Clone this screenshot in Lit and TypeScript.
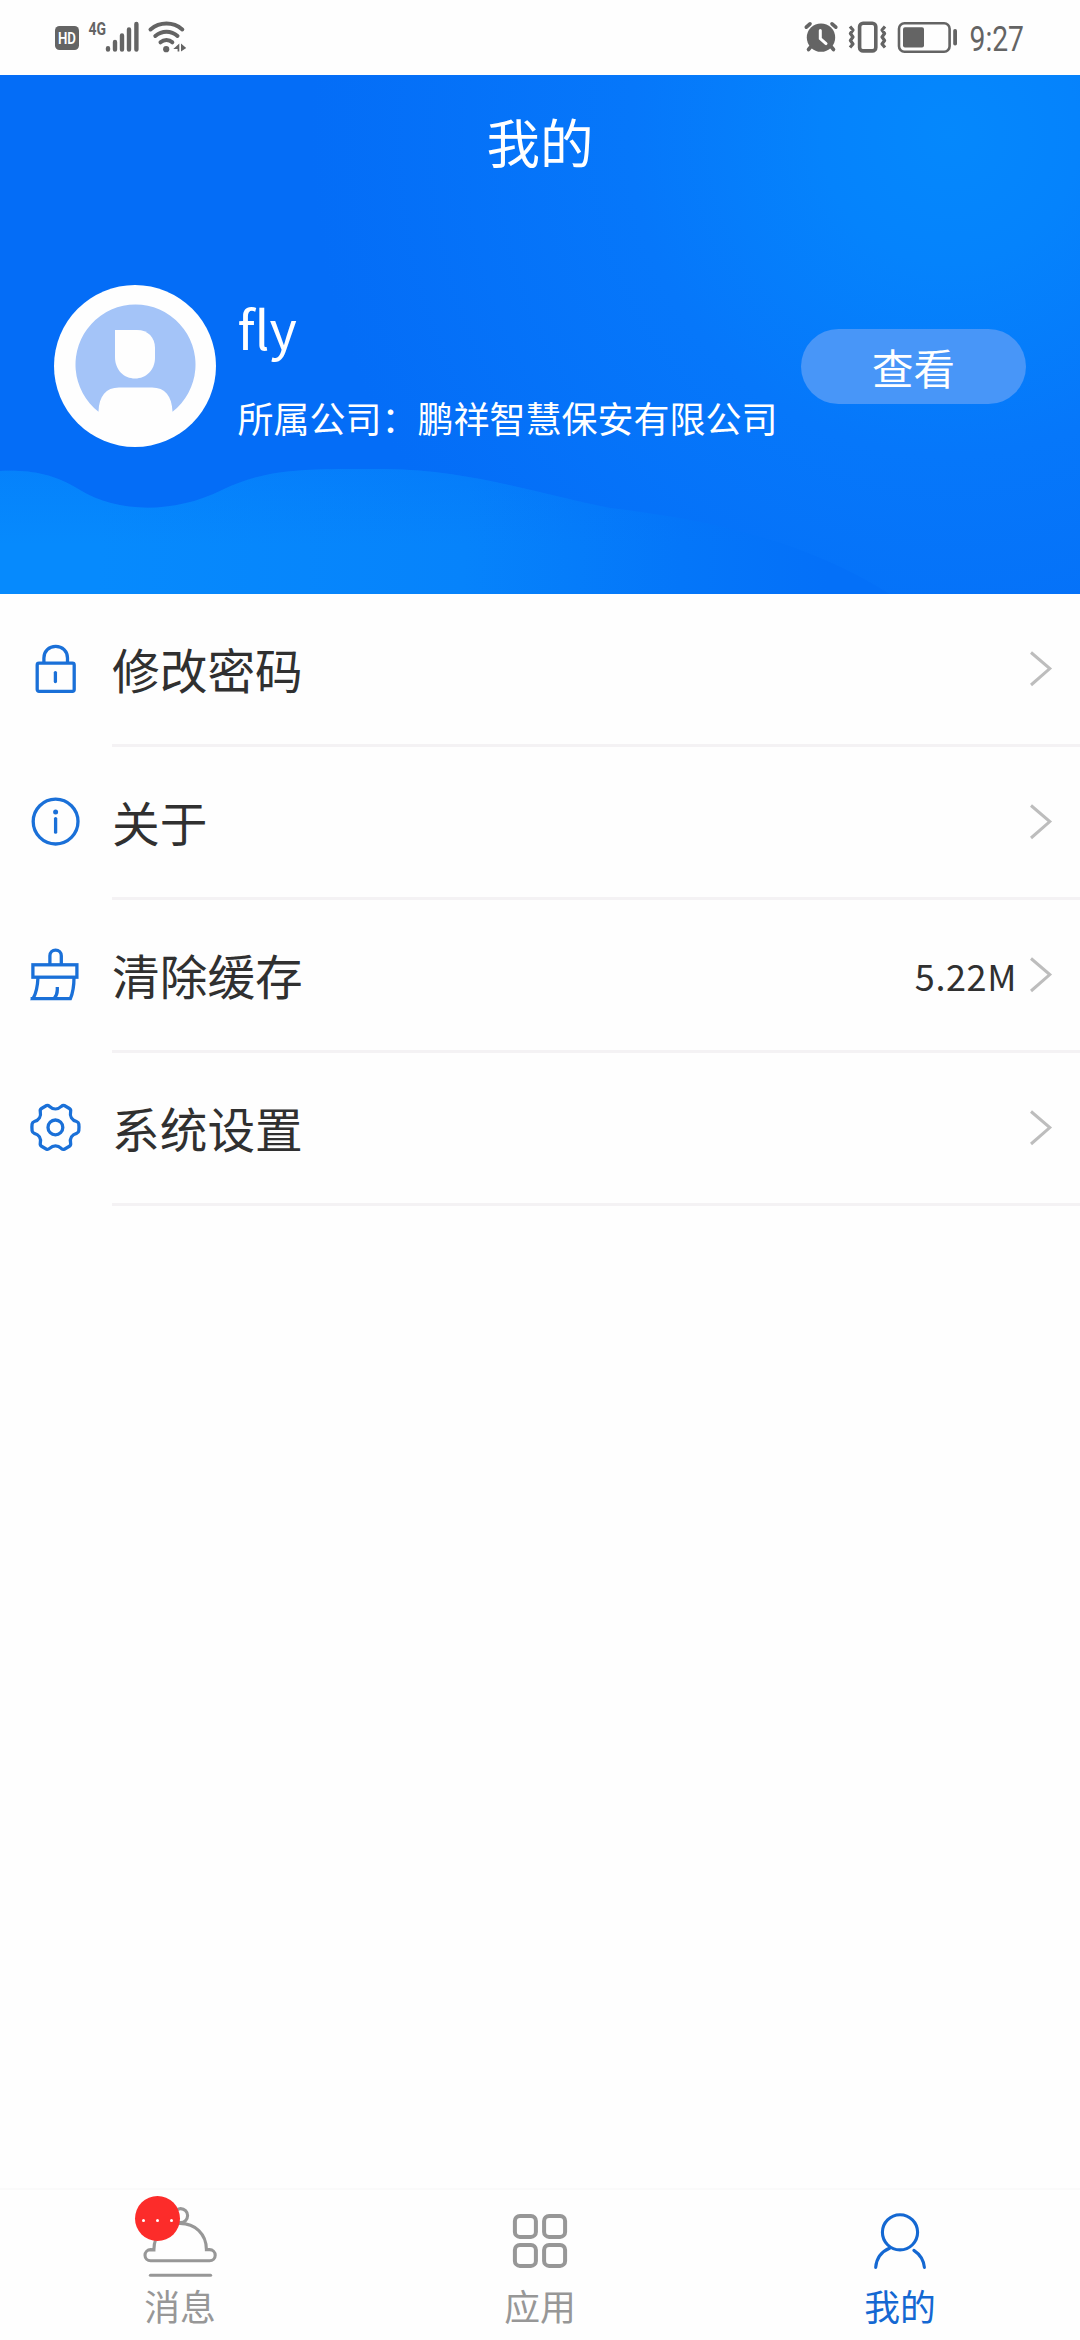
import { LitElement, html, svg, css, nothing, type TemplateResult } from "lit";
import { customElement, property } from "lit/decorators.js";

const rowIcons: Record<string, TemplateResult> = {
  lock: svg`
    <rect x="9.2" y="22.2" width="37" height="28.2" rx="1.8"/>
    <path d="M15.9 22V17C15.9 10.2 21 5.3 27.7 5.3S39.5 10.2 39.5 17V22"/>
    <path d="M27.4 31.6V40.6" stroke-linecap="round"/>`,
  info: svg`
    <circle cx="27.6" cy="27.6" r="22.4"/>
    <circle class="solid" cx="27.6" cy="18" r="2.5"/>
    <path d="M27.6 24.6V38.2" stroke-linecap="round"/>`,
  brush: svg`
    <path d="M21.9 17.6V8.8a5.7 5.7 0 0 1 11.4 0V17.6"/>
    <rect x="4.9" y="17.8" width="44" height="12.4"/>
    <path d="M10 30.2C9.6 39 8.2 46.4 5 51.6H42.4C45.2 45 46 38 46 30.2M29.3 40V43C29.3 46.5 28.2 49 26.2 51.6M2.6 51.6H8"/>`,
  gear: svg`
    <circle cx="27.4" cy="27.4" r="7.4"/>
    <path d="M18.5 5.6C19.8 5.1 20.6 5.5 21.6 6.4C25.2 9.7 29.8 9.7 33.3 6.4C34.3 5.5 35.1 5.1 36.4 5.6L41.4 8.5C42.7 9.3 42.9 10.2 42.6 11.6C41.6 16.3 44 20.3 48.6 21.5C50 21.9 50.6 22.6 50.8 24C51.1 26.2 51.1 28.6 50.8 30.8C50.6 32.2 50 32.9 48.6 33.3C44 34.5 41.6 38.5 42.6 43.2C42.9 44.6 42.7 45.5 41.4 46.3L36.4 49.2C35.1 49.7 34.3 49.3 33.3 48.4C29.8 45.1 25.2 45.1 21.6 48.4C20.6 49.3 19.8 49.7 18.5 49.2L13.5 46.3C12.2 45.5 12 44.6 12.3 43.2C13.3 38.5 10.9 34.5 6.3 33.3C4.9 32.9 4.3 32.2 4.1 30.8C3.8 28.6 3.8 26.2 4.1 24C4.3 22.6 4.9 21.9 6.3 21.5C10.9 20.3 13.3 16.3 12.3 11.6C12 10.2 12.2 9.3 13.5 8.5Z"/>`,
};

const tabIcons: Record<string, TemplateResult> = {
  bell: svg`
    <circle cx="50.6" cy="25.6" r="7"/>
    <path class="cover" d="M23.9 59.8C23.9 44 35 33.4 50 33.4S76.4 44 76.4 59.6H79.6a5.5 5.5 0 0 1 0 11.2H20.6a5.5 5.5 0 0 1 0-11.2Z"/>
    <path d="M20.4 85.3H80.6" stroke-linecap="round"/>`,
  grid: svg`
    <g stroke-width="4">
      <rect x="24.9" y="25.9" width="21" height="21" rx="5"/>
      <rect x="54.1" y="25.9" width="21" height="21" rx="5"/>
      <rect x="24.9" y="54.9" width="21" height="21" rx="5"/>
      <rect x="54.1" y="54.9" width="21" height="21" rx="5"/>
    </g>`,
  user: svg`
    <circle cx="50" cy="42.3" r="17.6"/>
    <path d="M40 58C31.8 61.4 26.4 68.5 25.7 77.4M63.9 60.4C70.2 64.6 73.7 70.5 74.4 77.4" stroke-linecap="round"/>`,
};

@customElement("status-bar")
class StatusBar extends LitElement {
  static styles = css`
    :host { display: block; height: 75px; background: #fefefe; }
    .glyphs { display: block; }
    text { font-family: "Roboto", sans-serif; }
  `;
  render() {
    return html`
      <svg class="glyphs" width="1080" height="75" fill="#646464">
        <rect x="55" y="26" width="24" height="24" rx="4.5"/>
        <text x="58" y="44" font-size="16.5" font-weight="600" fill="#fff" textLength="18" lengthAdjust="spacingAndGlyphs">HD</text>
        <text x="88.5" y="35" font-size="18" font-weight="700" textLength="17.5" lengthAdjust="spacingAndGlyphs">4G</text>
        <g stroke="#646464" stroke-width="4.4" stroke-linecap="round">
          <path d="M108 48.3V49.5M115 42V49.5M122 35.5V49.5M129 29.5V49.5M136.4 24V49.5"/>
        </g>
        <g stroke="#646464" stroke-width="4" stroke-linecap="round" fill="none">
          <path d="M150.5 29.5C160 21.6 173 21.6 182.3 29.5M155.3 36C162 30.4 171 30.4 177.5 36M160.5 42.3C164 39.2 169 39.2 172.3 42.3"/>
        </g>
        <circle cx="166.2" cy="49.2" r="3.1"/>
        <path d="M179.3 43.6V51.5H177.6V49L173.3 49ZM181 43.6L186.2 48L181 51.5Z"/>

        <g stroke="#646464" stroke-width="3.6" stroke-linecap="round" fill="none">
          <path d="M806.3 27.2L810 23.8M835.8 27.2L832 23.8M811 46.5L808.5 49.5M831 46.5L833.5 49.5"/>
        </g>
        <circle cx="821" cy="37.6" r="14.2"/>
        <path d="M820.3 30.5V38.6L826 43.6" stroke="#fff" stroke-width="3" fill="none" stroke-linecap="round"/>
        <g stroke="#646464" fill="none">
          <rect x="859.6" y="23.3" width="16.2" height="27.6" rx="3.5" stroke-width="3.6"/>
          <path stroke-width="3.2" stroke-linejoin="round" d="M850 26.5L853 30L850.4 33.5L853 37L850.4 40.5L853 44L850 47.5M885 26.5L882 30L884.6 33.5L882 37L884.6 40.5L882 44L885 47.5"/>
          <rect x="899" y="23.3" width="50.6" height="28.4" rx="5.5" stroke-width="2.6"/>
        </g>
        <rect x="903" y="27.3" width="21" height="20.2" rx="2"/>
        <rect x="953.2" y="29" width="3.8" height="16.5" rx="1.8"/>
        <text x="969.5" y="50.6" font-size="34.5" textLength="54.5" lengthAdjust="spacingAndGlyphs">9:27</text>
      </svg>`;
  }
}

@customElement("profile-header")
class ProfileHeader extends LitElement {
  static styles = css`
    :host { display: flex; flex-direction: column; position: relative; height: 519px; color: #fff; overflow: hidden; }
    .scene { position: absolute; inset: 0; z-index: -1; }
    .title { margin-top: 36px; height: 60px; line-height: 60px; font-size: 53.5px; text-align: center; }
    .person { display: flex; align-items: center; height: 162px; margin-top: 114px; padding: 0 54px; }
    .avatar { flex: none; display: block; }
    .facts { flex: 1; align-self: flex-start; display: flex; flex-direction: column; padding-left: 21.5px; }
    .name { height: 66px; line-height: 66px; font-size: 52.5px; margin-top: 9px; }
    .company { height: 46px; line-height: 46px; font-size: 36px; margin-top: 34px; white-space: nowrap; }
    .view { width: 225px; height: 75px; border: 0; border-radius: 38px; padding: 0; background: #4896f8;
      color: #fff; font: inherit; font-size: 41.5px; line-height: 76px; text-align: center; }
  `;
  render() {
    return html`
      <svg class="scene" width="1080" height="519" viewBox="0 0 1080 519" preserveAspectRatio="none">
        <defs>
          <radialGradient id="glow" gradientUnits="userSpaceOnUse" cx="950" cy="60" r="640">
            <stop offset="0" stop-color="#0588fc"/>
            <stop offset=".2" stop-color="#0583fc"/>
            <stop offset=".5" stop-color="#0677fa"/>
            <stop offset="1" stop-color="#046df7"/>
          </radialGradient>
          <linearGradient id="wave" gradientUnits="userSpaceOnUse" x1="100" y1="440" x2="830" y2="480">
            <stop offset="0" stop-color="#068afd"/>
            <stop offset=".5" stop-color="#0683fb"/>
            <stop offset=".8" stop-color="#0476f9"/>
            <stop offset="1" stop-color="#0470f8"/>
          </linearGradient>
          <linearGradient id="crest" gradientUnits="userSpaceOnUse" x1="0" y1="390" x2="0" y2="470">
            <stop offset="0" stop-color="#046df7" stop-opacity=".3"/>
            <stop offset="1" stop-color="#046df7" stop-opacity="0"/>
          </linearGradient>
        </defs>
        <rect width="1080" height="519" fill="url(#glow)"/>
        <path fill="url(#wave)" d="M0 396C30 395 52 398 80 415C115 437 172 440 222 415C270 392 310 394 385 394C470 395 535 418 610 433C700 444 800 462 890 519H0Z"/>
        <path fill="url(#crest)" d="M0 396C30 395 52 398 80 415C115 437 172 440 222 415C270 392 310 394 385 394C470 395 535 418 610 433C700 444 800 462 890 519H0Z"/>
      </svg>
      <div class="title">我的</div>
      <div class="person">
        <svg class="avatar" width="162" height="162" viewBox="0 0 162 162">
          <circle cx="81" cy="81" r="81" fill="#fefefe"/>
          <path fill="#a4c4f8" d="M44.5 126.8A60 60 0 1 1 118.5 126.8C118 111 111 102.5 98 102.5H65C52 102.5 45 111 44.5 126.8Z"/>
          <path fill="#fefefe" d="M61 45H83C94 45 101 52.5 101 63V73C101 85 92 93.5 81 93.5S61 85 61 72Z"/>
        </svg>
        <div class="facts">
          <div class="name">fly</div>
          <div class="company">所属公司：鹏祥智慧保安有限公司</div>
        </div>
        <button class="view">查看</button>
      </div>`;
  }
}

@customElement("menu-row")
class MenuRow extends LitElement {
  @property() icon = "";
  @property() label = "";
  @property() value = "";
  static styles = css`
    :host { display: flex; height: 153px; }
    .mark { flex: none; display: block; margin: 47px 28px 0; fill: none; stroke: #1a70d8; stroke-width: 3.3; }
    .solid { fill: #1a70d8; stroke: none; }
    .line { flex: 1; box-sizing: border-box; display: flex; align-items: center; border-bottom: 3px solid #f4f2f4; padding-right: 27px; }
    .label { flex: 1; font-size: 47.7px; line-height: 60px; color: #303030; margin-top: -1px; }
    .value { font-family: "Noto Sans CJK SC", sans-serif; font-size: 36px; line-height: 44px; color: #303030; letter-spacing: .6px; margin-top: -1px; margin-right: 10px; }
    .arrow { flex: none; display: block; fill: none; stroke: #bdbdbd; stroke-width: 3; }
  `;
  render() {
    return html`
      <svg class="mark" width="56" height="56" viewBox="0 0 56 56">${rowIcons[this.icon]}</svg>
      <div class="line">
        <div class="label">${this.label}</div>
        ${this.value ? html`<div class="value">${this.value}</div>` : nothing}
        <svg class="arrow" width="26" height="40" viewBox="0 0 26 40"><path d="M4 3.5L22.8 19.6L4 36"/></svg>
      </div>`;
  }
}

@customElement("tab-item")
class TabItem extends LitElement {
  @property() icon = "";
  @property() label = "";
  @property({ type: Boolean, reflect: true }) active = false;
  @property({ type: Boolean }) badge = false;
  static styles = css`
    :host { flex: 1; display: flex; flex-direction: column; align-items: center; color: #979797; }
    :host([active]) { color: #1468d2; }
    .figure { position: relative; width: 100px; height: 90px; }
    .art { display: block; fill: none; stroke: currentColor; stroke-width: 3.1; }
    .cover { fill: #fefefe; }
    .badge { position: absolute; left: 5px; top: 6px; width: 45px; height: 45px; border-radius: 50%; background: #fc2c2a;
      display: flex; align-items: center; justify-content: center; gap: 11px; }
    .dot { width: 3px; height: 3px; border-radius: 50%; background: #fff; margin-top: 3px; }
    .label { font-size: 35.8px; line-height: 44px; margin-top: 3px; }
  `;
  render() {
    return html`
      <div class="figure">
        <svg class="art" width="100" height="90" viewBox="0 0 100 90">${tabIcons[this.icon]}</svg>
        ${this.badge
          ? html`<div class="badge"><i class="dot"></i><i class="dot"></i><i class="dot"></i></div>`
          : nothing}
      </div>
      <div class="label">${this.label}</div>`;
  }
}

@customElement("app-root")
class AppRoot extends LitElement {
  static styles = css`
    :host { display: flex; flex-direction: column; height: 2340px; background: #fefefe; overflow: hidden;
      font-family: "Noto Sans CJK SC", sans-serif; isolation: isolate; }
    .menu { flex: 1; }
    .tabs { display: flex; height: 150px; border-top: 2px solid #fafafa; }
  `;
  render() {
    return html`
      <status-bar></status-bar>
      <profile-header></profile-header>
      <div class="menu">
        <menu-row icon="lock" label="修改密码"></menu-row>
        <menu-row icon="info" label="关于"></menu-row>
        <menu-row icon="brush" label="清除缓存" value="5.22M"></menu-row>
        <menu-row icon="gear" label="系统设置"></menu-row>
      </div>
      <nav class="tabs">
        <tab-item icon="bell" label="消息" badge></tab-item>
        <tab-item icon="grid" label="应用"></tab-item>
        <tab-item icon="user" label="我的" active></tab-item>
      </nav>`;
  }
}
